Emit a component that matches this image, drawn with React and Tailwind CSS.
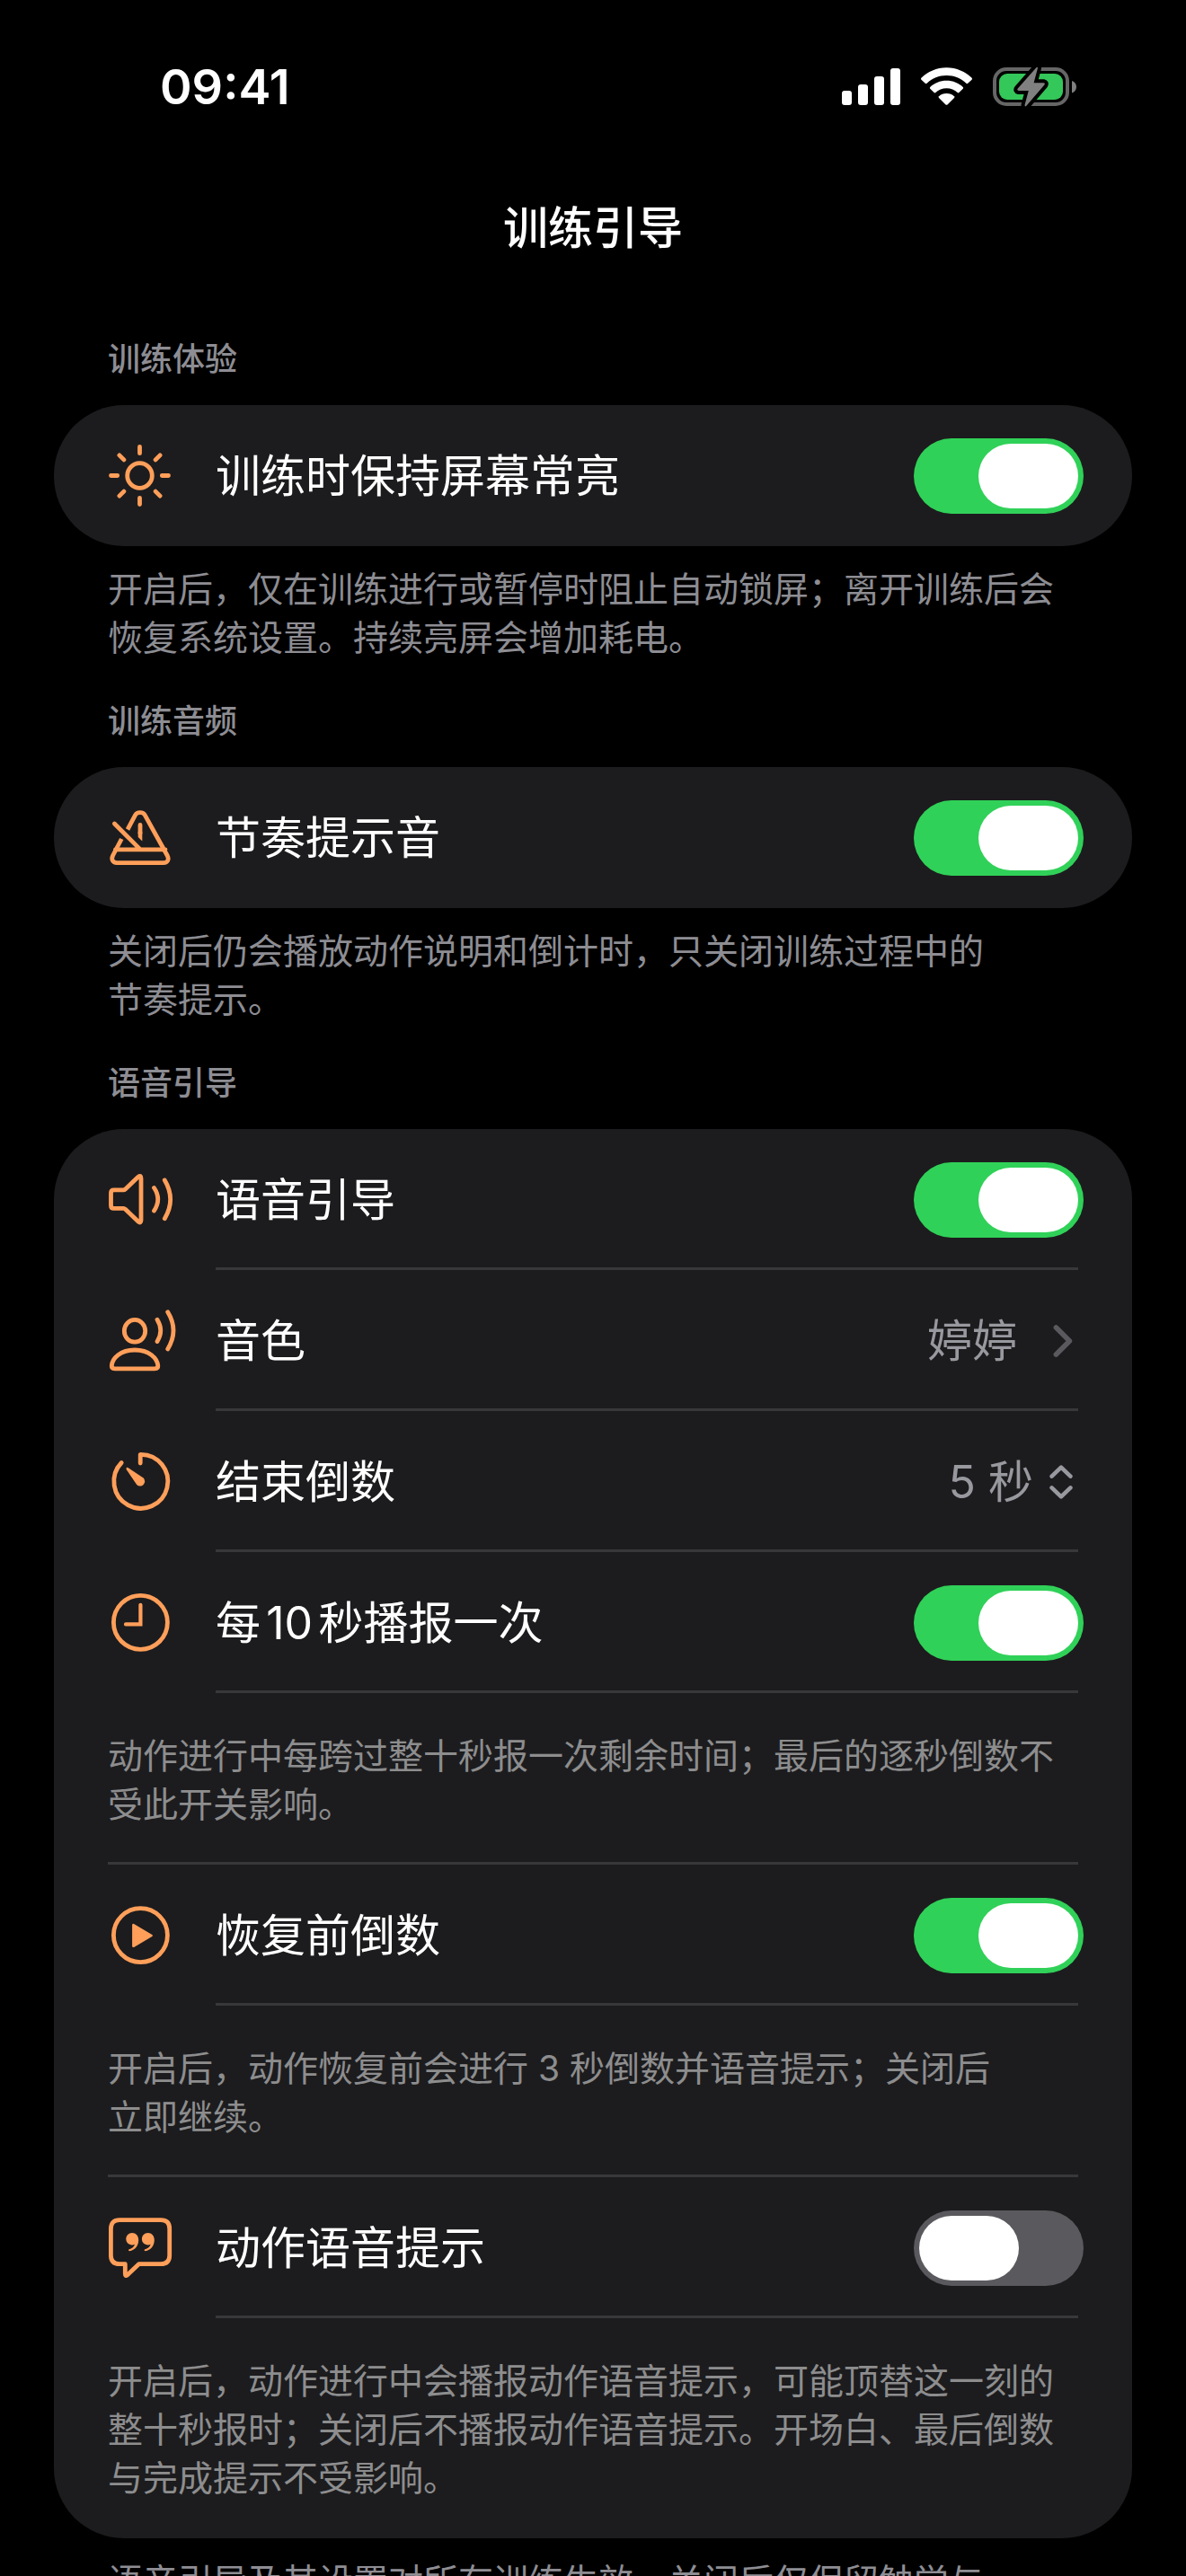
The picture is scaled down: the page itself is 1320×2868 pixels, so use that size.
import { useState } from "react"

const strokeProps = {
  fill: "none",
  stroke: "currentColor",
  strokeWidth: 4.8,
  strokeLinecap: "round",
  strokeLinejoin: "round",
}

function Icon({ children }) {
  return (
    <svg
      viewBox="0 0 80 81"
      className="w-[80px] h-[81px] shrink-0 text-[#ff9f5a]"
      aria-hidden="true"
      {...strokeProps}
    >
      {children}
    </svg>
  )
}

const SunIcon = () => (
  <Icon>
    <circle cx="39.5" cy="40.5" r="13.8" />
    <path d="M39.5 8.5v7.2M39.5 65.3v7.2M7.5 40.5h7.2M64.3 40.5h7.2M16.9 17.9l5 5M57.1 58.1l5 5M16.9 63.1l5-5M57.1 22.9l5-5" />
  </Icon>
)

const MetronomeIcon = () => (
  <Icon>
    <path
      strokeLinecap="butt"
      d="M26 31.5L34.6 15.4C36.6 11.8 43.2 11.8 45.2 15.4L70.2 60.5C72.4 65 70.6 68.6 66 68.6H14C9.4 68.6 7.6 65 9.6 60.5L19.3 42"
    />
    <path d="M11.4 25L40 53.6M12.5 53.8H68" />
    <path d="M40 26.5V36" />
    <path d="M37.7 34H42.3V44.5L37.7 40Z" fill="currentColor" stroke="none" />
  </Icon>
)

const SpeakerIcon = () => (
  <Icon>
    <path d="M7.5 33Q7.5 29.8 10.7 29.8H21.5Q22.5 29.8 23.5 28.9L37.8 15.3Q41 12.8 41 17V63.5Q41 67.6 37.8 65.1L23.5 51.3Q22.5 50.4 21.5 50.4H10.7Q7.5 50.4 7.5 47.2Z" />
    <path d="M55.5 27.5Q64 40 55.5 53M67.3 18.9Q80 40.2 67.3 61.7" />
  </Icon>
)

const VoiceIcon = () => (
  <Icon>
    <ellipse cx="34" cy="29.8" rx="11.7" ry="12.4" />
    <path d="M12 71.8Q8.3 71.8 8.3 68.5C9 60 18 51 34 51C50 51 59 60 59.8 68.5Q59.8 71.8 56 71.8Z" />
    <path d="M59 17.3Q66.5 29.3 59 41.6M70.7 8.8Q83.3 29.3 70.7 49.9" />
  </Icon>
)

const TimerIcon = () => (
  <Icon>
    <path d="M40.2 20V10.3A30 30 0 1 1 19.2 19.5" />
    <path
      d="M26.8 25.2L43.6 36.6A5.2 5.2 0 1 1 36.2 44L24.8 27.2Q23.6 23.8 26.8 25.2Z"
      fill="currentColor"
      stroke="none"
    />
  </Icon>
)

const ClockIcon = () => (
  <Icon>
    <circle cx="40.4" cy="40.3" r="30" />
    <path d="M40.4 20.8V42.4H24" strokeWidth="4.2" strokeLinejoin="miter" />
  </Icon>
)

const PlayIcon = () => (
  <Icon>
    <circle cx="40.4" cy="40.6" r="30" />
    <path d="M32.4 29.2V52.8L52.6 41Z" fill="currentColor" strokeWidth="2.6" />
  </Icon>
)

const QuoteIcon = () => (
  <Icon>
    <path d="M17 9.7H63Q72.7 9.7 72.7 19.5V49Q72.7 58.7 63 58.7H38.5L25.6 71Q23.3 72.6 23.3 69.5V58.7H17Q7.4 58.7 7.4 49V19.5Q7.4 9.7 17 9.7Z" />
    <g fill="currentColor" stroke="none">
      <path d="M31 24C35.2 24 38.2 27 38.2 32C38.2 38.5 34 43.2 28.2 44.3Q26.4 44 27.2 42.4C31 41.4 33.4 39.4 34 36.8Q32.8 37.4 31 37.4C27.2 37.4 24.3 34.6 24.3 30.8C24.3 27 27.2 24 31 24Z" />
      <path d="M48.6 24C52.8 24 55.8 27 55.8 32C55.8 38.5 51.6 43.2 45.8 44.3Q44 44 44.8 42.4C48.6 41.4 51 39.4 51.6 36.8Q50.4 37.4 48.6 37.4C44.8 37.4 41.9 34.6 41.9 30.8C41.9 27 44.8 24 48.6 24Z" />
    </g>
  </Icon>
)

function StatusBar() {
  return (
    <div className="flex h-[194px] items-center justify-between pl-[178px] pr-[121px]">
      <span className="text-[54px] leading-[60px] font-semibold">09:41</span>
      <div className="flex items-center gap-[23px]" aria-hidden="true">
        <svg viewBox="0 0 65 46" className="w-[65px] h-[46px]" fill="#fff">
          <rect x="0" y="27" width="11" height="16" rx="3" />
          <rect x="18" y="20" width="11" height="23" rx="3" />
          <rect x="36" y="11" width="11" height="32" rx="3" />
          <rect x="54" y="2" width="11" height="41" rx="3" />
        </svg>
        <svg viewBox="0 0 57 46" className="w-[57px] h-[46px]" fill="#fff">
          <path d="M28.5 1.3C39.5 1.3 49.5 5.8 56.6 12.8Q57.4 13.8 56.6 14.7L52.2 18.8Q51.3 19.5 50.4 18.7C44.6 13.2 37 10 28.5 10S12.4 13.2 6.6 18.7Q5.7 19.5 4.8 18.8L0.4 14.7Q-0.4 13.8 0.4 12.8C7.5 5.8 17.5 1.3 28.5 1.3Z" />
          <path d="M28.5 15.7C35.6 15.7 42 18.4 46.8 22.9Q47.6 23.9 46.8 24.8L42.4 29.1Q41.5 29.8 40.6 29C37.4 26.1 33.2 24.3 28.5 24.3S19.6 26.1 16.4 29Q15.5 29.8 14.6 29.1L10.2 24.8Q9.4 23.9 10.2 22.9C15 18.4 21.4 15.7 28.5 15.7Z" />
          <path d="M28.5 30C31.8 30 34.8 31.2 37 33.2Q37.8 34.1 37 35L29.5 42.4Q28.5 43.3 27.5 42.4L20 35Q19.2 34.1 20 33.2C22.2 31.2 25.2 30 28.5 30Z" />
        </svg>
        <svg viewBox="0 0 94 46" className="w-[94px] h-[46px]">
          <rect x="2" y="3" width="81" height="39" rx="13" fill="none" stroke="#666" strokeWidth="4" />
          <rect x="7" y="8" width="71" height="29" rx="9" fill="#34c759" />
          <path d="M88 16C91 17 93 19.5 93 22.7S91 28.4 88 29.4Z" fill="#808080" />
          <path
            d="M48.4 1.2Q50.6 0 49.8 2.6L45.6 18.2H56.5Q58.6 18.6 57.4 20.6L37.4 43.8Q35.2 45.8 35.6 42.6L39.8 27H28.6Q26.4 26.6 27.8 24.6Z"
            fill="#808080"
            stroke="#000"
            strokeWidth="8"
            paintOrder="stroke"
            strokeLinejoin="round"
          />
        </svg>
      </div>
    </div>
  )
}

function Switch({ id, defaultChecked }) {
  const [on, setOn] = useState(defaultChecked)

  return (
    <input
      id={id}
      type="checkbox"
      role="switch"
      checked={on}
      onChange={(e) => setOn(e.target.checked)}
      className="flex h-[84px] w-[189px] shrink-0 appearance-none rounded-full bg-[#5a5a5e] p-[6px] transition-colors before:h-[72px] before:w-[111px] before:rounded-full before:bg-white before:content-[''] checked:justify-end checked:bg-[#30d158]"
    />
  )
}

function Row({ icon, id, label, children }) {
  return (
    <div className="flex min-h-[157px] items-center pl-[56px] pr-[54px]">
      {icon}
      <label htmlFor={id} className="ml-[44px] flex-1 text-[50px] leading-[60px] [text-autospace:normal]">
        {label}
      </label>
      {children}
    </div>
  )
}

function Divider({ full }) {
  return (
    <div
      className={
        full
          ? "mx-[60px] -mt-[3px] h-[3px] bg-[#38383a]"
          : "ml-[180px] mr-[60px] -mt-[3px] h-[3px] bg-[#38383a]"
      }
    />
  )
}

// Hint shown as its own row inside a card
function CardNote({ children }) {
  return (
    <p className="whitespace-pre-line px-[60px] pt-[43px] pb-[40px] text-[39px] leading-[54px] text-[#8d8d8e]">
      {children}
    </p>
  )
}

function Section({ title, note, children }) {
  return (
    <section className="px-[60px] pb-[42px]">
      <h2 className="mb-[27px] px-[60px] text-[36px] leading-[48px] font-medium text-[#8d8d93]">{title}</h2>
      <div className="rounded-[78px] bg-[#1c1c1e]">{children}</div>
      <p className="whitespace-pre-line px-[60px] pt-[21px] text-[39px] leading-[54px] text-[#8d8d93]">
        {note}
      </p>
    </section>
  )
}

export default function App() {
  const [seconds, setSeconds] = useState("5")

  return (
    <div
      lang="zh-CN"
      className="flex h-screen flex-col overflow-hidden bg-black font-['Inter','Noto_Sans_CJK_SC',sans-serif] text-white"
    >
      <StatusBar />

      <header className="flex h-[120px] shrink-0 items-center justify-center">
        <h1 className="text-[50px] leading-[60px] font-medium">训练引导</h1>
      </header>

      <main className="flex-1 overflow-y-auto pt-[62px] [scrollbar-width:none]">
        <Section
          title="训练体验"
          note={"开启后，仅在训练进行或暂停时阻止自动锁屏；离开训练后会恢复系统设置。持续亮屏会增加耗电。"}
        >
          <Row id="keep-awake" icon={<SunIcon />} label="训练时保持屏幕常亮">
            <Switch id="keep-awake" defaultChecked />
          </Row>
        </Section>

        <Section
          title="训练音频"
          note={"关闭后仍会播放动作说明和倒计时，只关闭训练过程中的\n节奏提示。"}
        >
          <Row id="beat" icon={<MetronomeIcon />} label="节奏提示音">
            <Switch id="beat" defaultChecked />
          </Row>
        </Section>

        <Section
          title="语音引导"
          note={"语音引导及其设置对所有训练生效，关闭后仅保留触觉与\n屏幕提示。"}
        >
          <Row id="voice" icon={<SpeakerIcon />} label="语音引导">
            <Switch id="voice" defaultChecked />
          </Row>
          <Divider />

          <Row id="timbre" icon={<VoiceIcon />} label="音色">
            <button
              id="timbre"
              className="flex items-center gap-[40px] pr-[12px] text-[50px] leading-[60px] text-[#98989f]"
            >
              婷婷
              <svg viewBox="0 0 22 38" className="w-[22px] h-[38px] text-[#5a5a5e]" {...strokeProps} strokeWidth="5.6">
                <path d="M3.4 4L18.4 19L3.4 34" />
              </svg>
            </button>
          </Row>
          <Divider />

          <Row id="countdown" icon={<TimerIcon />} label="结束倒数">
            <div className="flex items-center gap-[18px] pr-[12px] text-[#98989f]">
              <select
                id="countdown"
                value={seconds}
                onChange={(e) => setSeconds(e.target.value)}
                className="appearance-none bg-transparent text-[50px] leading-[60px] [field-sizing:content]"
              >
                <option value="3">3 秒</option>
                <option value="5">5 秒</option>
                <option value="10">10 秒</option>
              </select>
              <svg viewBox="0 0 26 38" className="w-[26px] h-[38px]" {...strokeProps} strokeWidth="4.6">
                <path d="M2.6 12.6L13 2.6L23.4 12.6M2.6 25.4L13 35.4L23.4 25.4" />
              </svg>
            </div>
          </Row>
          <Divider />

          <Row id="every-ten" icon={<ClockIcon />} label="每10秒播报一次">
            <Switch id="every-ten" defaultChecked />
          </Row>
          <Divider />
          <CardNote>动作进行中每跨过整十秒报一次剩余时间；最后的逐秒倒数不受此开关影响。</CardNote>
          <Divider full />

          <Row id="resume" icon={<PlayIcon />} label="恢复前倒数">
            <Switch id="resume" defaultChecked />
          </Row>
          <Divider />
          <CardNote>{"开启后，动作恢复前会进行 3 秒倒数并语音提示；关闭后\n立即继续。"}</CardNote>
          <Divider full />

          <Row id="cues" icon={<QuoteIcon />} label="动作语音提示">
            <Switch id="cues" defaultChecked={false} />
          </Row>
          <Divider />
          <CardNote>
            {"开启后，动作进行中会播报动作语音提示，可能顶替这一刻的整十秒报时；关闭后不播报动作语音提示。开场白、最后倒数\n与完成提示不受影响。"}
          </CardNote>
        </Section>
      </main>
    </div>
  )
}
